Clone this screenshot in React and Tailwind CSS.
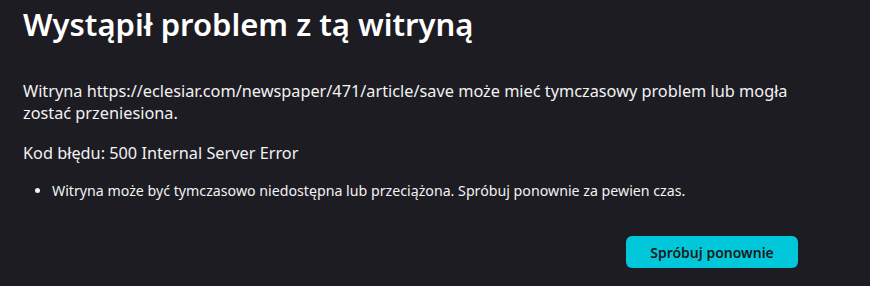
export default function App() {
  return (
    <div
      className="w-[870px] h-[286px] bg-[#1d1c22] text-white overflow-hidden"
      style={{ fontFamily: '"Noto Sans", "Open Sans", sans-serif' }}
    >
      <div className="pl-[23px] pr-[72px] pt-[4px]">
        <h1 className="text-[31px] leading-[40px] font-semibold text-white">
          Wystąpił problem z tą witryną
        </h1>
        <p className="mt-[36px] text-[16.3px] leading-[22px] text-[#f2f2f2]">
          Witryna https://eclesiar.com/newspaper/471/article/save może mieć tymczasowy problem lub mogła zostać przeniesiona.
        </p>
        <p className="mt-[18px] text-[16.3px] leading-[22px] text-[#f2f2f2]">
          Kod błędu: 500 Internal Server Error
        </p>
        <ul className="mt-[17px] pl-[29px] list-disc text-[14.2px] leading-[20px] text-[#f2f2f2]">
          <li>Witryna może być tymczasowo niedostępna lub przeciążona. Spróbuj ponownie za pewien czas.</li>
        </ul>
        <div className="flex justify-end mt-[35px]">
          <button className="w-[172px] h-[32px] rounded-[6px] bg-[#00c8da] text-[#1b1b1b] text-[14px] font-semibold">
            Spróbuj ponownie
          </button>
        </div>
      </div>
    </div>
  );
}
